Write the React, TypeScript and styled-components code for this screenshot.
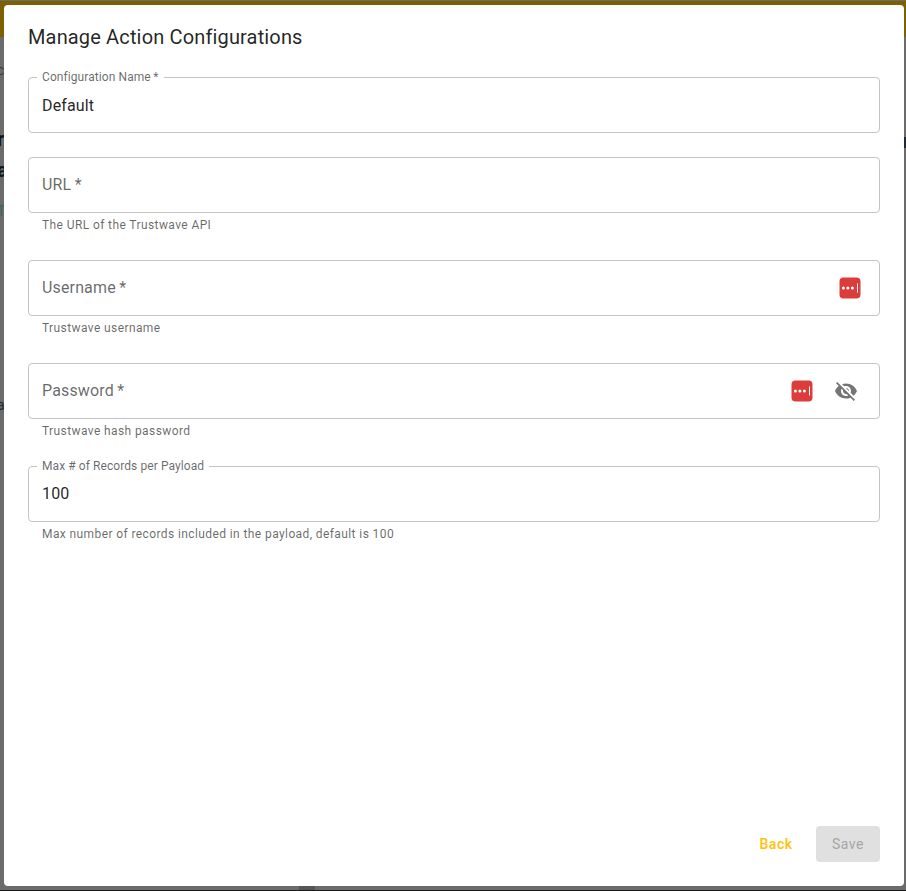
import React from "react";
import styled, { createGlobalStyle } from "styled-components";

const GlobalStyle = createGlobalStyle`
  html, body {
    margin: 0;
    padding: 0;
    height: 100%;
    overflow: hidden;
  }
  body {
    font-family: Roboto, "Liberation Sans", sans-serif;
  }
`;

const fields = [
  { id: 1, label: "Configuration Name\u2009*", value: "Default", helper: "", lock: false, eye: false, low: true },
  { id: 2, label: "URL\u2009*", value: "", helper: "The URL of the Trustwave API", lock: false, eye: false, low: false },
  { id: 3, label: "Username\u2009*", value: "", helper: "Trustwave username", lock: true, eye: false, low: false },
  { id: 4, label: "Password\u2009*", value: "", helper: "Trustwave hash password", lock: true, eye: true, low: false },
  {
    id: 5,
    label: "Max # of Records per Payload",
    value: "100",
    helper: "Max number of records included in the payload, default is 100",
    lock: false,
    eye: false,
    low: false,
  },
];

// bits of the page behind the dialog that still show at its edges
const peeks = [
  { id: 1, text: "c", top: 60, size: 14, weight: 400, color: "#3a3a3a" },
  { id: 2, text: "l", top: 96, size: 14, weight: 400, color: "#123f66" },
  { id: 3, text: "r", top: 129, size: 20, weight: 700, color: "#0c1620" },
  { id: 4, text: "a", top: 160, size: 20, weight: 700, color: "#0c1620" },
  { id: 5, text: "T", top: 201, size: 14, weight: 400, color: "#3f6464" },
  { id: 6, text: "a", top: 395, size: 14, weight: 400, color: "#202830" },
];

const LockIcon = () => (
  <svg width="22" height="22" viewBox="0 0 22 22">
    <rect x="0.5" y="0.5" width="21" height="21" rx="4" fill="#dc3c3a" />
    <circle cx="4.4" cy="11" r="1.5" fill="#fff" />
    <circle cx="8.9" cy="11" r="1.5" fill="#fff" />
    <circle cx="13.4" cy="11" r="1.5" fill="#fff" />
    <rect x="18" y="6.5" width="1" height="9" fill="#fff" />
  </svg>
);

const EyeOffIcon = () => (
  <svg width="24" height="24" viewBox="0 0 24 24" fill="#757575">
    <path d="M12 7c2.76 0 5 2.24 5 5 0 .65-.13 1.26-.36 1.83l2.92 2.92c1.51-1.26 2.7-2.89 3.43-4.75-1.73-4.39-6-7.5-11-7.5-1.4 0-2.74.25-3.98.7l2.16 2.16C10.74 7.13 11.35 7 12 7zM2 4.27l2.28 2.28.46.46C3.08 8.3 1.78 10.02 1 12c1.73 4.39 6 7.5 11 7.5 1.55 0 3.03-.3 4.38-.84l.42.42L19.73 22 21 20.73 3.27 3 2 4.27zM7.53 9.8l1.55 1.55c-.05.21-.08.43-.08.65 0 1.66 1.34 3 3 3 .22 0 .44-.03.65-.08l1.55 1.55c-.67.33-1.41.53-2.2.53-2.76 0-5-2.24-5-5 0-.79.2-1.53.53-2.2zm4.31-.78l3.15 3.15.02-.16c0-1.66-1.34-3-3-3l-.17.01z" />
  </svg>
);

const App = () => {
  return (
    <>
      <GlobalStyle />
      <Page>
        <TopBar />
        {peeks.map((item) => (
          <PeekText key={item.id} $top={item.top} $size={item.size} $weight={item.weight} $color={item.color}>
            {item.text}
          </PeekText>
        ))}
        <RightPeek />
        <BottomPeek />
        <Dialog>
          <Title>Manage Action Configurations</Title>
          <Form>
            {fields.map((item) => (
              <Field key={item.id}>
                <InputBox>
                  {item.value ? (
                    <NotchedOutline>
                      <Legend>{item.label}</Legend>
                    </NotchedOutline>
                  ) : (
                    <PlainOutline />
                  )}
                  <InputText $filled={!!item.value} $low={item.low}>
                    {item.value || item.label}
                  </InputText>
                  {item.lock && (
                    <LockSlot>
                      <LockIcon />
                    </LockSlot>
                  )}
                  {item.eye && (
                    <EyeSlot>
                      <EyeOffIcon />
                    </EyeSlot>
                  )}
                </InputBox>
                {item.helper && <Helper>{item.helper}</Helper>}
              </Field>
            ))}
          </Form>
          <Footer>
            <BackButton>Back</BackButton>
            <SaveButton disabled>Save</SaveButton>
          </Footer>
        </Dialog>
      </Page>
    </>
  );
};

export default App;

const Page = styled.div`
  position: relative;
  box-sizing: border-box;
  width: 906px;
  height: 891px;
  padding: 5px 2px 5px 4px;
  background: #6b6b6b;
  border-bottom: 1px solid #1a1a1a;
  overflow: hidden;
`;

const TopBar = styled.div`
  position: absolute;
  top: 1px;
  left: 0;
  right: 0;
  height: 36px;
  background: #7f6000;
`;

const PeekText = styled.span<{ $top: number; $size: number; $weight: number; $color: string }>`
  position: absolute;
  left: -3px;
  top: ${(props) => props.$top}px;
  font-size: ${(props) => props.$size}px;
  font-weight: ${(props) => props.$weight};
  line-height: 20px;
  color: ${(props) => props.$color};
`;

const RightPeek = styled.div`
  position: absolute;
  top: 137px;
  right: 0;
  width: 2px;
  height: 11px;
  background: #1c2a38;
`;

const BottomPeek = styled.div`
  position: absolute;
  bottom: 0;
  left: 299px;
  width: 16px;
  height: 5px;
  background: #565656;
`;

const Dialog = styled.div`
  position: relative;
  box-sizing: border-box;
  height: 881px;
  padding: 0 24px 24px;
  display: flex;
  flex-direction: column;
  background: #fff;
  border-radius: 4px;
`;

const Title = styled.h2`
  margin: 0;
  padding: 16px 0 24px;
  font-size: 20px;
  font-weight: 400;
  line-height: 32px;
  letter-spacing: 0.15px;
  color: rgba(0, 0, 0, 0.87);
`;

const Form = styled.div`
  flex: 1;
  display: flex;
  flex-direction: column;
  gap: 24px;
`;

const Field = styled.div`
  display: flex;
  flex-direction: column;
`;

const InputBox = styled.div`
  position: relative;
  height: 56px;
  display: flex;
  align-items: center;
  padding: 0 14px;
`;

const NotchedOutline = styled.fieldset`
  position: absolute;
  inset: -5px 0 0;
  margin: 0;
  padding: 0 8px;
  border: 1px solid #c4c4c4;
  border-radius: 4px;
  pointer-events: none;
`;

const PlainOutline = styled.div`
  position: absolute;
  inset: 0;
  border: 1px solid #c4c4c4;
  border-radius: 4px;
  pointer-events: none;
`;

const Legend = styled.legend`
  padding: 0 5px;
  font-size: 12px;
  line-height: 11px;
  letter-spacing: 0.08px;
  color: rgba(0, 0, 0, 0.6);
`;

const InputText = styled.div<{ $filled: boolean; $low: boolean }>`
  flex: 1;
  padding-top: ${(props) => (props.$low ? "2px" : "0")};
  font-size: 16px;
  line-height: 24px;
  letter-spacing: 0.15px;
  color: ${(props) => (props.$filled ? "rgba(0, 0, 0, 0.87)" : "rgba(0, 0, 0, 0.6)")};
`;

const LockSlot = styled.div`
  display: flex;
  margin-right: 5px;
`;

const EyeSlot = styled.div`
  display: flex;
  margin-left: 16px;
  margin-right: 8px;
`;

const Helper = styled.p`
  margin: 2px 14px 1px;
  font-size: 12px;
  line-height: 20px;
  letter-spacing: 0.4px;
  color: rgba(0, 0, 0, 0.6);
`;

const Footer = styled.div`
  display: flex;
  justify-content: flex-end;
  align-items: center;
  gap: 8px;
`;

const BackButton = styled.button`
  width: 64px;
  height: 36px;
  padding: 0;
  border: 0;
  background: none;
  font-family: inherit;
  font-size: 14px;
  font-weight: 500;
  letter-spacing: 0.5px;
  color: #ffc107;
`;

const SaveButton = styled.button`
  width: 64px;
  height: 36px;
  padding: 0;
  border: 0;
  border-radius: 4px;
  background: #e0e0e0;
  font-family: inherit;
  font-size: 14px;
  font-weight: 400;
  letter-spacing: 0.5px;
  color: #a6a6a6;
`;
